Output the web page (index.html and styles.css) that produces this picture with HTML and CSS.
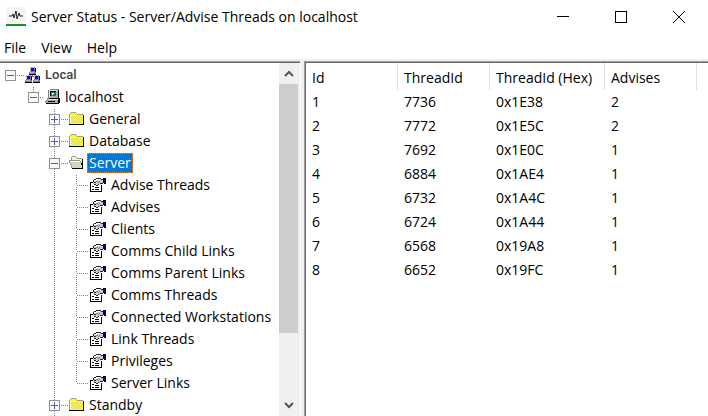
FILE: index.html
```
<!doctype html>
<html lang="en">
<head>
  <title>Server Status - Server/Advise Threads on localhost</title>
  <meta charset="utf-8">
  <link rel="stylesheet" href="styles.css">
</head>
<body>

  <!-- icons used more than once -->
  <svg class="defs" width="0" height="0">
    <symbol id="minus" viewBox="0 0 11 11">
      <rect x="0.5" y="0.5" width="10" height="10" fill="#fafafa" stroke="#919191"/>
      <path d="M2 5h7v1h-7z" fill="#4b63a7"/>
    </symbol>
    <symbol id="plus" viewBox="0 0 11 11">
      <rect x="0.5" y="0.5" width="10" height="10" fill="#fafafa" stroke="#919191"/>
      <path d="M2 5h7v1h-7zM5 2h1v7h-1z" fill="#4b63a7"/>
    </symbol>
    <symbol id="pc" viewBox="0 0 7 8">
      <path d="M1 0h5v5h-5zM0 5h7v2h-7z" fill="#808080"/>
      <path d="M1 0h4v1h-4zM1 1h1v3h-1zM1 5h4v1h-4z" fill="#c0c0c0"/>
      <path d="M2 1h3v3h-3z" fill="#0000ff"/>
      <path d="M6 1h1v4h-1zM0 7h7v1h-7z" fill="#000"/>
    </symbol>
    <symbol id="folder" viewBox="0 0 16 14">
      <path d="M1 2h1v-1h5v1h1v1h6v9h-13z" fill="#ffff00"/>
      <path d="M3 4h1v1h-1zM5 4h1v1h-1zM7 4h1v1h-1zM9 4h1v1h-1zM11 4h1v1h-1zM2 5h1v1h-1zM4 5h1v1h-1zM6 5h1v1h-1zM8 5h1v1h-1zM10 5h1v1h-1zM12 5h1v1h-1zM3 6h1v1h-1zM5 6h1v1h-1zM7 6h1v1h-1zM9 6h1v1h-1zM11 6h1v1h-1zM2 7h1v1h-1zM4 7h1v1h-1zM6 7h1v1h-1zM8 7h1v1h-1zM10 7h1v1h-1zM12 7h1v1h-1zM3 8h1v1h-1zM5 8h1v1h-1zM7 8h1v1h-1zM9 8h1v1h-1zM11 8h1v1h-1zM2 9h1v1h-1zM4 9h1v1h-1zM6 9h1v1h-1zM8 9h1v1h-1zM10 9h1v1h-1zM12 9h1v1h-1zM3 10h1v1h-1zM5 10h1v1h-1zM7 10h1v1h-1zM9 10h1v1h-1zM11 10h1v1h-1z" fill="#e0e050"/>
      <path d="M1 3h6v1h-6zM1 3h1v8h-1z" fill="#fffff0"/>
      <path d="M2 0h5v1h-5zM1 1h1v1h-1zM7 1h1v1h-1zM8 2h6v1h-6zM0 2h1v10h-1z" fill="#a0a070"/>
      <path d="M14 3h1v10h-15v-1h14z" fill="#000"/>
    </symbol>
    <symbol id="prop" viewBox="0 0 16 14">
      <path d="M1 4h10v9h-10z" fill="#fff"/>
      <path d="M0 4h3v1h-2v8h10v-6h1v7h-12z" fill="#000"/>
      <path d="M2 8h2v1h-2zM5 9h4v1h-4zM2 11h2v1h-2zM5 11h4v1h-4z" fill="#000"/>
      <path d="M5 1h8v4h-3v2h-2v1h-1v-2h-4v-4z" fill="#c8c8c8"/>
      <path d="M6 0h5v1h-5zM4 1h2v1h-2zM3 2h1v2h-1zM11 1h2v1h-2zM4 4h2v1h-2zM4 6h2v1h-2zM6 7h2v1h-2zM8 6h1v1h-1zM10 5h3v1h-3z" fill="#202020"/>
      <path d="M6 3h2v1h-2zM8 4h1v1h-1zM9 3h1v1h-1z" fill="#808080"/>
      <path d="M6 1h4v1h-4zM4 2h3v1h-3z" fill="#fff"/>
      <path d="M13 0h3v6h-2v-1h-1z" fill="#000080"/>
    </symbol>
  </svg>

  <header class="titlebar">
    <svg class="logo" width="20" height="20" viewBox="0 0 20 20">
      <rect width="20" height="20" fill="#f5f5f5"/>
      <rect y="17" width="20" height="2" fill="#0b9434"/>
      <path d="M3 9H6L7 7L8 11L10 4L11 12L13 6L14 9H17" fill="none" stroke="#222"/>
    </svg>
    <h1>Server Status - Server/Advise Threads on localhost</h1>
    <button class="winbtn" aria-label="Minimize"><svg width="12" height="12"><path d="M0 5h12v1h-12z"/></svg></button>
    <button class="winbtn" aria-label="Maximize"><svg width="12" height="12"><path d="M0.5 0.5h11v11h-11z" fill="none" stroke="#000"/></svg></button>
    <button class="winbtn" aria-label="Close"><svg class="smooth" width="12" height="12"><path d="M0 0L12 12M12 0L0 12" fill="none" stroke="#000"/></svg></button>
  </header>

  <nav class="menu">
    <button>File</button>
    <button>View</button>
    <button>Help</button>
  </nav>

  <main class="panes">
    <section class="left">
      <div class="tree">
        <div class="row">
          <button class="toggle" aria-label="Collapse Local"><svg width="11" height="11"><use href="#minus"/></svg></button>
          <span class="dots"></span>
          <svg class="icon" width="16" height="16">
            <path d="M7 7h1v2h-1zM3 9h9v1h-9z" fill="#808000"/>
            <use href="#pc" x="4" y="0" width="7" height="8"/>
            <use href="#pc" x="0" y="8" width="7" height="8"/>
            <use href="#pc" x="8" y="8" width="7" height="8"/>
          </svg>
          <span class="label root">Local</span>
        </div>
        <ul class="hosts">
          <li>
            <div class="row">
              <button class="toggle" aria-label="Collapse localhost"><svg width="11" height="11"><use href="#minus"/></svg></button>
              <span class="dots short"></span>
              <svg class="icon" width="16" height="16">
                <path d="M4 1h9v8h-9zM2 10h11v4h-13v-1h1v-1h1z" fill="#a8a8a8"/>
                <path d="M4 1h9v1h-8v7h-1zM3 10h10v1h-10z" fill="#e0e0e0"/>
                <path d="M6 3h5v4h-5z" fill="#008080"/>
                <path d="M7 4h2v1h-2zM7 5h1v1h-1z" fill="#fff"/>
                <path d="M5 0h9v1h-9zM3 1h1v8h-1zM2 9h2v1h-2zM1 11h1v1h-1zM0 12h1v1h-1z" fill="#808080"/>
                <path d="M13 1h1v8h1v5h-1v1h-13v-1h12v-4h-9v-1h9zM5 2h6v1h-5v4h-1zM3 12h7v1h-7z" fill="#000"/>
              </svg>
              <span class="label">localhost</span>
            </div>
            <ul class="groups">
              <li class="row">
                <button class="toggle" aria-label="Expand General"><svg width="11" height="11"><use href="#plus"/></svg></button>
                <span class="dots"></span>
                <svg class="icon" width="16" height="14"><use href="#folder"/></svg>
                <span class="label">General</span>
              </li>
              <li class="row">
                <button class="toggle" aria-label="Expand Database"><svg width="11" height="11"><use href="#plus"/></svg></button>
                <span class="dots"></span>
                <svg class="icon" width="16" height="14"><use href="#folder"/></svg>
                <span class="label">Database</span>
              </li>
              <li>
                <div class="row">
                  <button class="toggle" aria-label="Collapse Server"><svg width="11" height="11"><use href="#minus"/></svg></button>
                  <span class="dots"></span>
                  <svg class="icon" width="16" height="14">
                    <path d="M3 1h5v1h5v10h-10z" fill="#f4f4c8"/>
                    <path d="M1 5h10l3 7h-11z" fill="#d4d4c0"/>
                    <path d="M3 0h4v1h-4zM2 1h1v3h-1zM7 1h1v1h-1zM8 2h5v1h-5zM0 4h11v1h-11zM0 5h1v2h-1zM1 7h1v2h-1zM2 9h1v3h-1zM11 5h1v2h-1zM12 7h1v2h-1z" fill="#98988a"/>
                    <path d="M1 5h10v1h-10z" fill="#fff"/>
                    <path d="M13 3h1v10h-11v-1h10v-3h-1v-2h1z" fill="#000"/>
                  </svg>
                  <span class="label selected">Server</span>
                </div>
                <ul class="items">
                  <li class="row"><span class="dots"></span><svg class="icon" width="16" height="14"><use href="#prop"/></svg><span class="label">Advise Threads</span></li>
                  <li class="row"><span class="dots"></span><svg class="icon" width="16" height="14"><use href="#prop"/></svg><span class="label">Advises</span></li>
                  <li class="row"><span class="dots"></span><svg class="icon" width="16" height="14"><use href="#prop"/></svg><span class="label">Clients</span></li>
                  <li class="row"><span class="dots"></span><svg class="icon" width="16" height="14"><use href="#prop"/></svg><span class="label">Comms Child Links</span></li>
                  <li class="row"><span class="dots"></span><svg class="icon" width="16" height="14"><use href="#prop"/></svg><span class="label">Comms Parent Links</span></li>
                  <li class="row"><span class="dots"></span><svg class="icon" width="16" height="14"><use href="#prop"/></svg><span class="label">Comms Threads</span></li>
                  <li class="row"><span class="dots"></span><svg class="icon" width="16" height="14"><use href="#prop"/></svg><span class="label">Connected Workstations</span></li>
                  <li class="row"><span class="dots"></span><svg class="icon" width="16" height="14"><use href="#prop"/></svg><span class="label">Link Threads</span></li>
                  <li class="row"><span class="dots"></span><svg class="icon" width="16" height="14"><use href="#prop"/></svg><span class="label">Privileges</span></li>
                  <li class="row"><span class="dots"></span><svg class="icon" width="16" height="14"><use href="#prop"/></svg><span class="label">Server Links</span></li>
                </ul>
              </li>
              <li class="row">
                <button class="toggle" aria-label="Expand Standby"><svg width="11" height="11"><use href="#plus"/></svg></button>
                <span class="dots"></span>
                <svg class="icon" width="16" height="14"><use href="#folder"/></svg>
                <span class="label">Standby</span>
              </li>
            </ul>
          </li>
        </ul>
      </div>
      <div class="scrollbar">
        <button aria-label="Scroll up"><svg class="smooth" width="10" height="7"><path d="M1 6L5 2L9 6" fill="none" stroke="#555" stroke-width="2"/></svg></button>
        <div class="track"><div class="thumb"></div></div>
        <button aria-label="Scroll down"><svg class="smooth" width="10" height="7"><path d="M1 1L5 5L9 1" fill="none" stroke="#555" stroke-width="2"/></svg></button>
      </div>
    </section>

    <section class="right">
      <table>
        <thead>
          <tr><th>Id</th><th>ThreadId</th><th class="wide">ThreadId (Hex)</th><th>Advises</th></tr>
        </thead>
        <tbody>
          <tr><td>1</td><td>7736</td><td>0x1E38</td><td>2</td></tr>
          <tr><td>2</td><td>7772</td><td>0x1E5C</td><td>2</td></tr>
          <tr><td>3</td><td>7692</td><td>0x1E0C</td><td>1</td></tr>
          <tr><td>4</td><td>6884</td><td>0x1AE4</td><td>1</td></tr>
          <tr><td>5</td><td>6732</td><td>0x1A4C</td><td>1</td></tr>
          <tr><td>6</td><td>6724</td><td>0x1A44</td><td>1</td></tr>
          <tr><td>7</td><td>6568</td><td>0x19A8</td><td>1</td></tr>
          <tr><td>8</td><td>6652</td><td>0x19FC</td><td>1</td></tr>
        </tbody>
      </table>
    </section>
  </main>

</body>
</html>
```
FILE: styles.css
```
* {
  box-sizing: border-box;
}
body {
  margin: 0;
  height: 100vh;
  display: flex;
  flex-direction: column;
  overflow: hidden;
  background: #fff;
  color: #000;
  font: 14px/22px "Open Sans", "Noto Sans", sans-serif;
}
button {
  display: flex;
  align-items: center;
  justify-content: center;
  padding: 0;
  border: 0;
  background: none;
  color: inherit;
  font: inherit;
}
ul {
  margin: 0;
  padding: 0;
  list-style: none;
}
svg {
  flex: none;
  display: block;
  shape-rendering: crispEdges;
}
.smooth, .logo {
  shape-rendering: auto;
}
.defs {
  position: absolute;
}

/* title bar */
.titlebar {
  display: flex;
  align-items: center;
  height: 34px;
  padding-left: 6px;
}
.titlebar h1 {
  flex: 1;
  margin: 0 0 0 5px;
  font-size: 14px;
  font-weight: normal;
  white-space: nowrap;
}
.winbtn {
  width: 58px;
  height: 34px;
}

/* menu */
.menu {
  display: flex;
  gap: 15px;
  height: 25px;
  padding: 3px 4px 0;
}

/* panes */
.panes {
  flex: 1;
  display: flex;
  min-height: 0;
  padding-top: 2px;
  background: #f0f0f0;
}
.left {
  display: flex;
  width: 301px;
  flex: none;
  border-top: 1px solid #a0a0a0;
  border-right: 1px solid #fff;
  background: #fff;
}
.tree {
  flex: 1;
  overflow: hidden;
  border-top: 1px solid #696969;
  padding: 1px 0 0 5px;
}
.row {
  display: flex;
  align-items: center;
  height: 22px;
  white-space: nowrap;
}
.dots {
  width: 8px;
  height: 1px;
  margin-right: 1px;
  background: repeating-linear-gradient(to right, #fff 0 1px, #808080 1px 2px);
}
.dots.short {
  width: 5px;
}
.icon {
  margin-right: 2px;
}
.label {
  padding: 0 2px;
  line-height: 20px;
}
.root {
  color: #444;
  font-family: Roboto, sans-serif;
  font-size: 13px;
  font-weight: 500;
}
.selected {
  background: #0078d7;
  color: #fff;
  outline: 1px dotted #ff8728;
  outline-offset: -1px;
}

/* dotted lines that join the branches */
.hosts, .groups, .items {
  background: repeating-linear-gradient(#fff 0 1px, #808080 1px 2px) no-repeat;
}
.hosts {
  padding-left: 23px;
  background-size: 1px 8px;
  background-position: 28px 0;
}
.groups {
  padding-left: 21px;
  background-size: 1px 100%;
  background-position: 26px 0;
}
.items {
  padding-left: 27px;
  background-size: 1px calc(100% - 11px);
  background-position: 27px 0;
}
.items .dots {
  width: 13px;
}
.items .icon {
  margin-right: 3px;
}

/* scrollbar */
.scrollbar {
  display: flex;
  flex-direction: column;
  width: 21px;
  border-top: 1px solid #696969;
  padding-right: 2px;
  background: #f0f0f0;
}
.scrollbar button {
  height: 21px;
}
.track {
  flex: 1;
}
.thumb {
  height: 80%;
  background: #cdcdcd;
}

/* thread list */
.right {
  flex: 1;
  margin-left: 3px;
  border: solid #a0a0a0;
  border-width: 1px 0 0 1px;
  background: #fff;
}
table {
  width: 100%;
  height: 100%;
  display: block;
  border: solid #696969;
  border-width: 1px 0 0 1px;
  border-spacing: 0;
  line-height: 24px;
}
th, td {
  width: 92px;
  padding: 0 6px;
  text-align: left;
  font-weight: normal;
  white-space: nowrap;
}
th {
  padding-top: 3px;
  border-right: 1px solid #e0e0e0;
}
.wide {
  width: 115px;
}
```
